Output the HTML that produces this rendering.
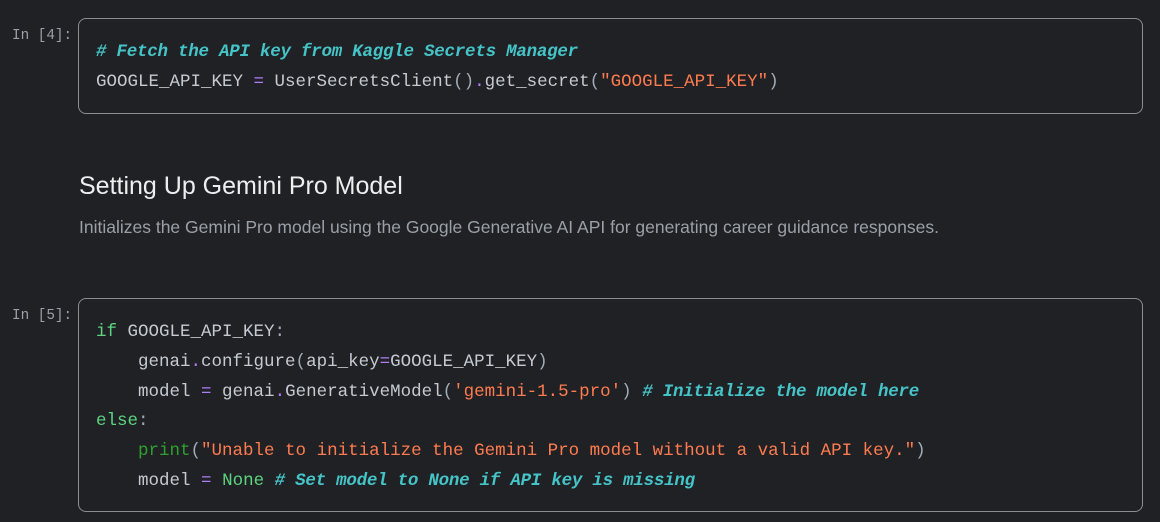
<!DOCTYPE html>
<html><head><style>
body{margin:0;background:#202124;width:1160px;height:522px;overflow:hidden;font-family:"Liberation Sans",sans-serif;position:relative}
.p{position:absolute;left:12px;font-family:"Liberation Mono",monospace;font-size:14.3px;color:#9aa0a6}
.box{position:absolute;left:78px;width:1065px;border:1px solid #8a8d91;border-radius:8px;box-sizing:border-box}
pre{margin:0;position:absolute;left:17px;font-family:"Liberation Mono",monospace;font-size:17.5px;line-height:29.8px;color:#c5cad0}
.c{color:#45c4c8;font-style:italic;font-weight:bold;letter-spacing:-0.25px}
.o{color:#b07cf7}
.s{color:#ff7b4f}
.k{color:#5cd480}
.b{color:#2ea02e}
.q{color:#a0abb8}
h2{position:absolute;left:79px;top:172px;margin:0;font-weight:normal;font-size:25px;color:#eceef0}
.d{position:absolute;left:79px;top:217px;font-size:17.5px;color:#9aa0a6}
</style></head><body>
<div class="p" style="top:28px">In [4]:</div>
<div class="box" style="top:18px;height:96px">
<pre style="top:19px"><span class="c"># Fetch the API key from Kaggle Secrets Manager</span>
GOOGLE_API_KEY <span class="o">=</span> UserSecretsClient<span class="q">()</span><span class="o">.</span>get_secret<span class="q">(</span><span class="s">"GOOGLE_API_KEY"</span><span class="q">)</span></pre>
</div>
<h2>Setting Up Gemini Pro Model</h2>
<div class="d">Initializes the Gemini Pro model using the Google Generative AI API for generating career guidance responses.</div>
<div class="p" style="top:308px">In [5]:</div>
<div class="box" style="top:298px;height:214px">
<pre style="top:19px;left:17px"><span class="k">if</span> GOOGLE_API_KEY<span class="q">:</span>
    genai<span class="o">.</span>configure<span class="q">(</span>api_key<span class="o">=</span>GOOGLE_API_KEY<span class="q">)</span>
    model <span class="o">=</span> genai<span class="o">.</span>GenerativeModel<span class="q">(</span><span class="s">'gemini-1.5-pro'</span><span class="q">)</span> <span class="c"># Initialize the model here</span>
<span class="k">else</span><span class="q">:</span>
    <span class="b">print</span><span class="q">(</span><span class="s">"Unable to initialize the Gemini Pro model without a valid API key."</span><span class="q">)</span>
    model <span class="o">=</span> <span class="k">None</span> <span class="c"># Set model to None if API key is missing</span></pre>
</div>
</body></html>
